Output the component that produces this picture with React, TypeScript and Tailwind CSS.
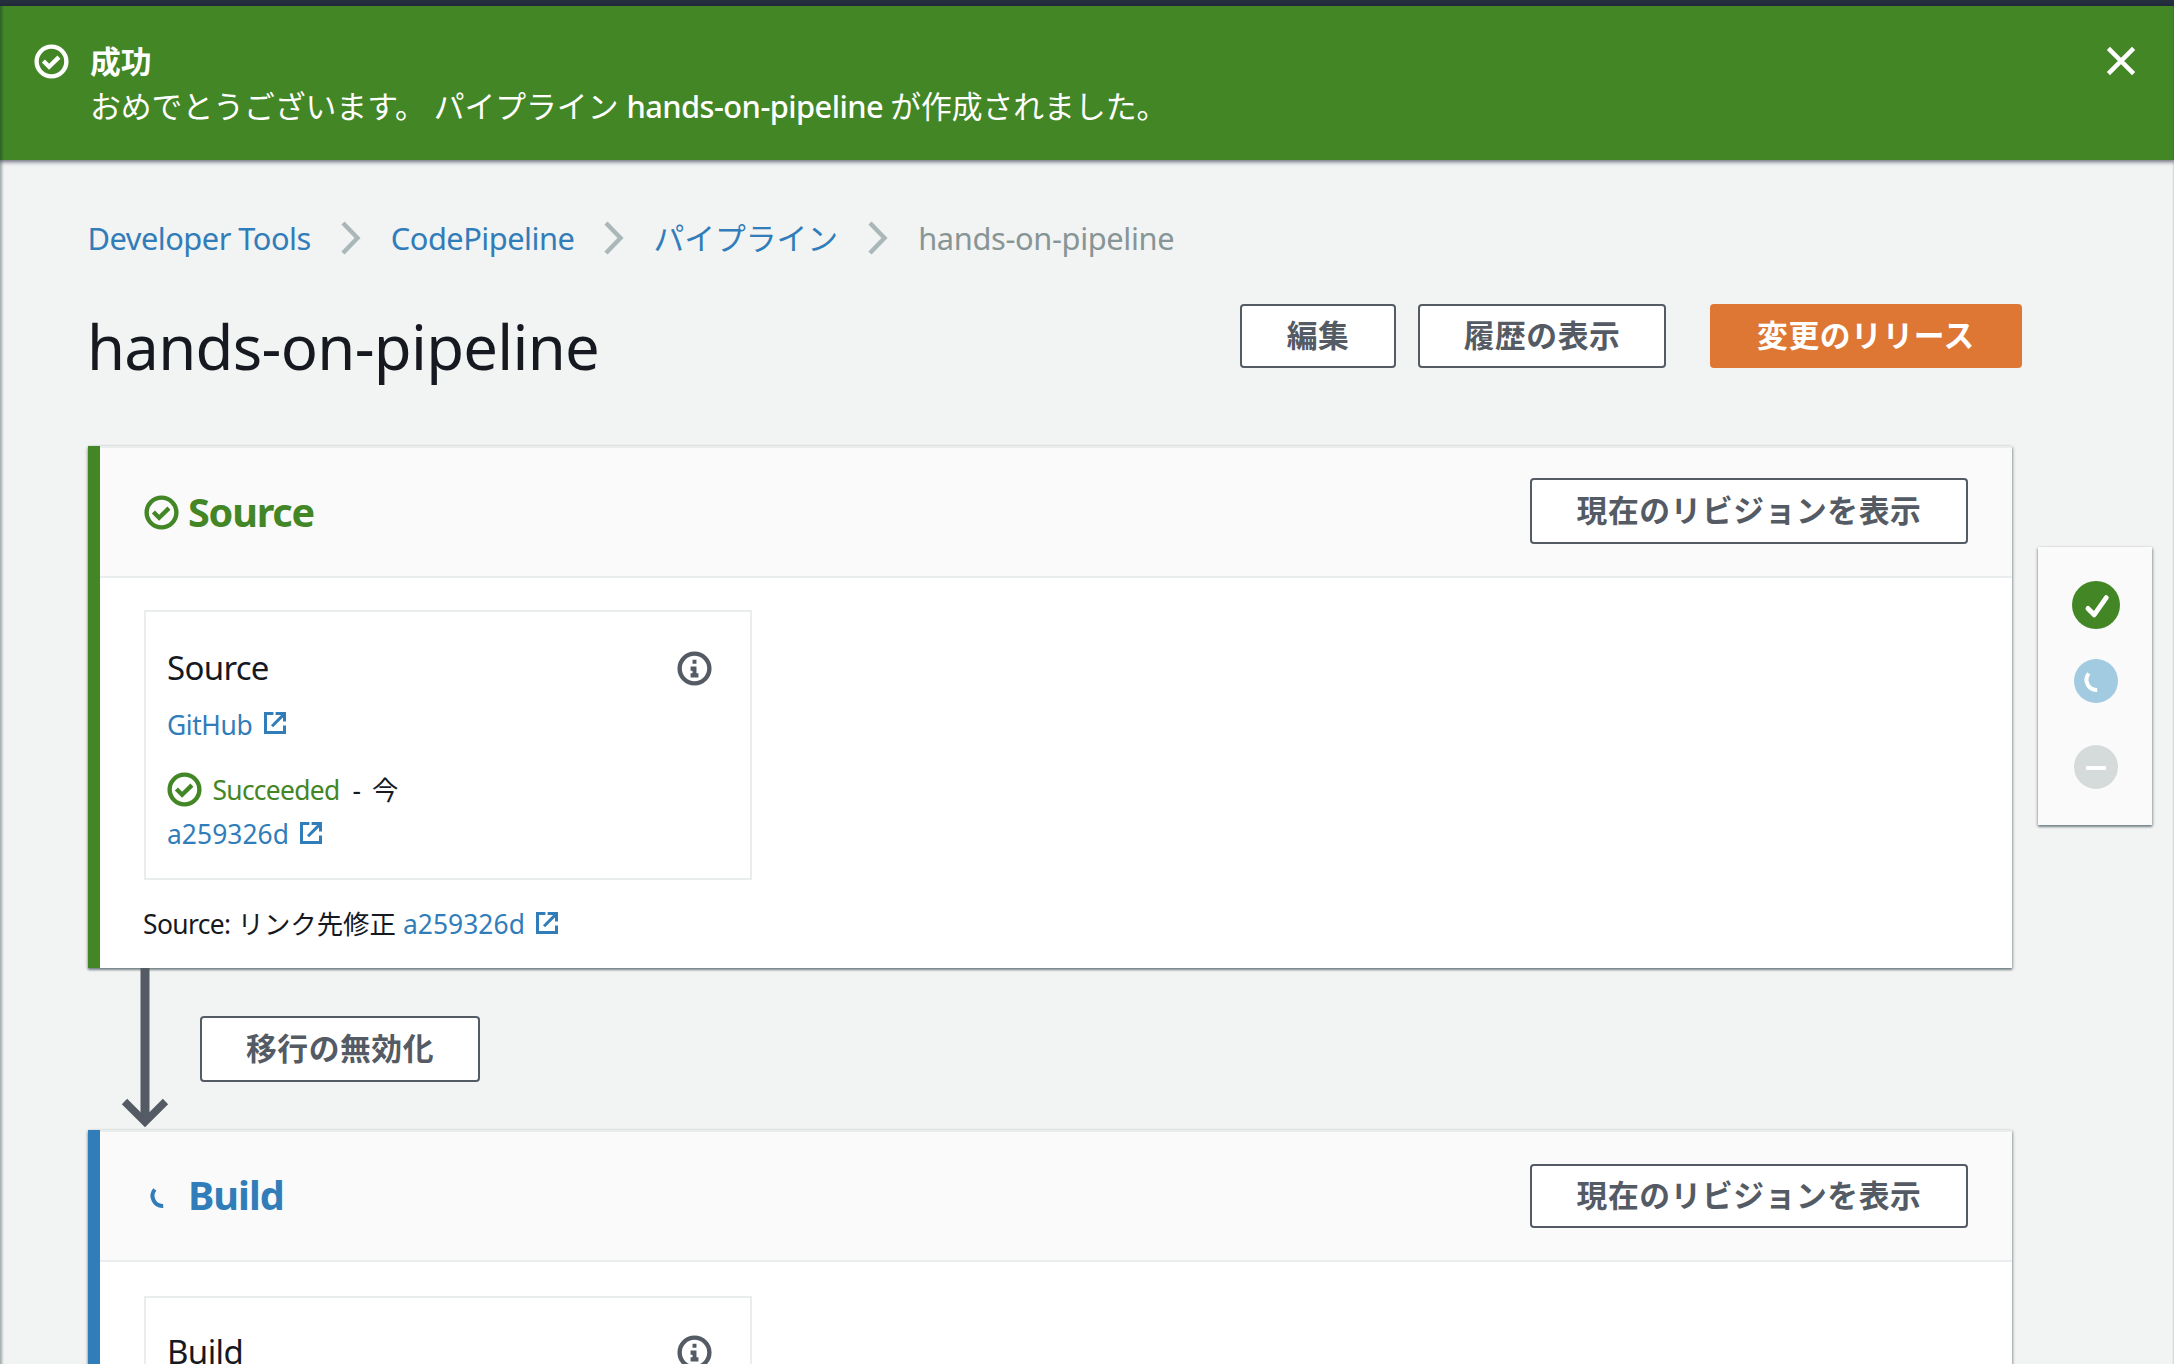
import type { ReactNode } from "react";

function CheckCircle({ className = "" }: { className?: string }) {
  return (
    <svg viewBox="0 0 16 16" className={`h-[35px] w-[35px] shrink-0 ${className}`} fill="none" stroke="currentColor" strokeWidth="2">
      <circle cx="8" cy="8" r="6.8" />
      <path d="M4.3 7.8l2.6 2.6 4.5-4.4" />
    </svg>
  );
}

function InfoCircle() {
  return (
    <svg viewBox="0 0 16 16" className="h-[35px] w-[35px] shrink-0 text-[#545b64]" fill="none" stroke="currentColor" strokeWidth="2">
      <circle cx="8" cy="8" r="6.8" />
      <path d="M7.1 4h1.8v1.8H7.1zM6.2 7.1h2.7v3.1h.9v1.9H6.2v-1.9h.9V9h-.9z" fill="currentColor" stroke="none" />
    </svg>
  );
}

function ExternalLink({ className = "" }: { className?: string }) {
  return (
    <svg viewBox="0 0 22 22" className={`inline-block h-[22px] w-[22px] shrink-0 ${className}`} fill="none" stroke="currentColor" strokeWidth="3">
      <path d="M9.4 1.5H1.5v19h19V13.4" />
      <path d="M11.6 1.5h8.9V9.6" />
      <path d="M19.6 2.6L8 14.2" strokeWidth="3" />
    </svg>
  );
}

function Chevron() {
  return (
    <svg viewBox="0 0 20 34" className="mr-[30px] ml-[30px] h-[34px] w-[20px] shrink-0" fill="none" stroke="#aab7b8" strokeWidth="4.4">
      <path d="M2 2l14.5 15L2 32" />
    </svg>
  );
}

function Spinner({ className = "" }: { className?: string }) {
  return (
    <svg viewBox="0 0 34 34" className={`h-[34px] w-[34px] shrink-0 ${className}`} fill="none" stroke="currentColor" strokeWidth="4">
      <path d="M9.8 9.6A10 10 0 0 0 18.2 25.9" />
    </svg>
  );
}

function Button({ className = "", children }: { className?: string; children: ReactNode }) {
  return (
    <button className={`flex shrink-0 items-center justify-center rounded-[4px] border-2 pb-[2px] text-[30.8px] leading-[44px] font-bold tracking-[0.55px] whitespace-nowrap ${className}`}>
      {children}
    </button>
  );
}

const outline = "border-[#545b64] bg-white text-[#545b64]";

const panelShadow = "shadow-[0_2px_2px_0_rgba(0,28,36,0.35),1px_1px_3px_0_rgba(0,28,36,0.25),-1px_1px_3px_0_rgba(0,28,36,0.15)]";

export default function App() {
  return (
    <div className="relative h-[1364px] w-[2174px] overflow-hidden bg-[#f2f3f3] font-['Noto_Sans','Noto_Sans_CJK_JP',sans-serif] text-[#16191f]">
      <div className="h-[6px] bg-[#262f3e]" />

      <div className="flex h-[154px] items-start bg-[#438626] pt-[34px] pr-[36px] pl-[33.5px] text-[30.8px] leading-[44px] text-white shadow-[0_1px_4px_1px_rgba(20,25,50,0.6)]">
        <CheckCircle className="mt-[3.5px]" />
        <div className="ml-[21.5px] grow">
          <div className="-mt-[1px] font-bold">成功</div>
          <div className="mt-[1px] flex whitespace-pre">
            <span>おめでとうございます。</span>
            <span className="ml-[8px]">パイプライン</span>
            <span className="ml-[8px] font-medium tracking-[-0.55px]">hands-on-pipeline</span>
            <span className="ml-[7px]">が作成されました。</span>
          </div>
        </div>
        <svg viewBox="0 0 34 34" className="mt-[4px] h-[34px] w-[34px]" fill="none" stroke="currentColor" strokeWidth="4.4">
          <path d="M4.4 4.4L29.6 29.6M29.6 4.4L4.4 29.6" />
        </svg>
      </div>

      <nav className="mt-[56px] flex h-[44px] items-center pl-[87.5px] text-[30.8px] leading-[44px] tracking-[-0.5px] text-[#317db9]">
        <span>Developer Tools</span>
        <Chevron />
        <span>CodePipeline</span>
        <Chevron />
        <span className="-ml-[1px] tracking-normal">パイプライン</span>
        <Chevron />
        <span className="tracking-[-0.35px] text-[#879596]">hands-on-pipeline</span>
      </nav>

      <header className="mt-[44px] flex h-[142px] items-start pl-[87px]">
        <h1 className="mt-[8px] grow text-[61.6px] leading-[68px] tracking-[-0.7px]">hands-on-pipeline</h1>
        <Button className={`${outline} h-[64px] w-[156px]`}>編集</Button>
        <Button className={`${outline} ml-[22px] h-[64px] w-[248px]`}>履歴の表示</Button>
        <Button className="mr-[152px] ml-[44px] h-[64px] w-[312px] border-[#dd7733] bg-[#dd7733] text-white">変更のリリース</Button>
      </header>

      <div className="flex items-start pl-[88px]">
        <main className="w-[1924px]">
          <section className={`h-[522px] border-l-[12px] border-[#438626] bg-white ${panelShadow}`}>
            <div className="flex h-[132px] items-start border-y-2 border-[#eaeded] bg-[#fafafa] pr-[44px] pl-[44px]">
              <CheckCircle className="mt-[47px] text-[#438626]" />
              <h2 className="mt-[42px] ml-[9px] grow text-[39.6px] leading-[44px] font-bold tracking-[-1.2px] text-[#438626]">Source</h2>
              <Button className={`${outline} mt-[30px] h-[66px] w-[438px]`}>現在のリビジョンを表示</Button>
            </div>
            <div className="pt-[32px] pl-[44px] text-[26.4px] leading-[36px]">
              <div className="h-[270px] w-[608px] border-2 border-[#eaeded] pt-[34px] pr-[38px] pl-[21px]">
                <div className="flex items-center justify-between">
                  <h3 className="text-[33px] leading-[44px] tracking-[-0.7px]">Source</h3>
                  <InfoCircle />
                </div>
                <div className="mt-[17px] flex text-[#317db9]">
                  <span className="tracking-[-0.4px]">GitHub</span>
                  <ExternalLink className="mt-[5px] ml-[12px]" />
                </div>
                <div className="mt-[29px] flex">
                  <CheckCircle className="text-[#438626]" />
                  <span className="ml-[10.5px] tracking-[-0.7px] text-[#438626]">Succeeded</span>
                  <span className="ml-[13px]">-</span>
                  <span className="ml-[11px]">今</span>
                </div>
                <div className="mt-[8px] flex text-[#317db9]">
                  <span className="tracking-[0.05px]">a259326d</span>
                  <ExternalLink className="mt-[6px] ml-[11px]" />
                </div>
              </div>
              <div className="mt-[26px] flex">
                <span className="-ml-[1px] tracking-[-0.6px]">Source:</span>
                <span className="ml-[7px]">リンク先修正</span>
                <span className="ml-[7px] tracking-[0.05px] text-[#317db9]">a259326d</span>
                <ExternalLink className="mt-[6px] ml-[11px] text-[#317db9]" />
              </div>
            </div>
          </section>

          <div className="flex h-[162px] items-start">
            <svg viewBox="0 0 48 162" className="ml-[33px] h-[162px] w-[48px]" fill="none" stroke="#545b64">
              <path d="M24 0V154" strokeWidth="9" />
              <path d="M3.5 133.5L24 154L44.5 133.5" strokeWidth="7.5" />
            </svg>
            <Button className={`${outline} mt-[48px] ml-[31px] h-[66px] w-[280px]`}>移行の無効化</Button>
          </div>

          <section className={`h-[522px] border-l-[12px] border-[#317db9] bg-white ${panelShadow}`}>
            <div className="flex h-[132px] items-start border-y-2 border-[#eaeded] bg-[#fafafa] pr-[44px] pl-[44px]">
              <Spinner className="mt-[48px] ml-[1px] text-[#317db9]" />
              <h2 className="mt-[41px] ml-[9px] grow text-[39.6px] leading-[44px] font-bold tracking-[-1px] text-[#317db9]">Build</h2>
              <Button className={`${outline} mt-[32px] h-[64px] w-[438px]`}>現在のリビジョンを表示</Button>
            </div>
            <div className="pt-[34px] pl-[44px]">
              <div className="h-[270px] w-[608px] border-2 border-[#eaeded] pt-[32px] pr-[38px] pl-[21px]">
                <div className="flex items-center justify-between">
                  <h3 className="text-[33px] leading-[44px] tracking-[-0.6px]">Build</h3>
                  <InfoCircle />
                </div>
              </div>
            </div>
          </section>
        </main>

        <aside className={`mt-[101px] ml-[26px] flex h-[278px] w-[114px] flex-col items-center bg-[#fafafa] pt-[34px] pl-[2px] ${panelShadow}`}>
          <span className="flex h-[48px] w-[48px] items-center justify-center rounded-full bg-[#438626] text-white">
            <svg viewBox="0 0 49 49" className="h-[48px] w-[48px]" fill="none" stroke="currentColor" strokeWidth="5" strokeLinecap="round" strokeLinejoin="round">
              <path d="M16.3 28L22.6 34.5L35 17" />
            </svg>
          </span>
          <span className="mt-[30px] flex h-[44px] w-[44px] items-center justify-center rounded-full bg-[#a2cae1] text-white">
            <Spinner />
          </span>
          <span className="mt-[42px] flex h-[44px] w-[44px] items-center justify-center rounded-full bg-[#d5dbdb] pt-[2px]">
            <span className="h-[4px] w-[20px] rounded-[1px] bg-white" />
          </span>
        </aside>
      </div>

      <div className="absolute top-[6px] bottom-0 left-0 w-[4px] bg-gradient-to-r from-[#001c24]/35 to-transparent" />
      <div className="absolute top-[6px] right-0 bottom-0 w-[2px] bg-gradient-to-l from-[#001c24]/15 to-transparent" />
    </div>
  );
}
